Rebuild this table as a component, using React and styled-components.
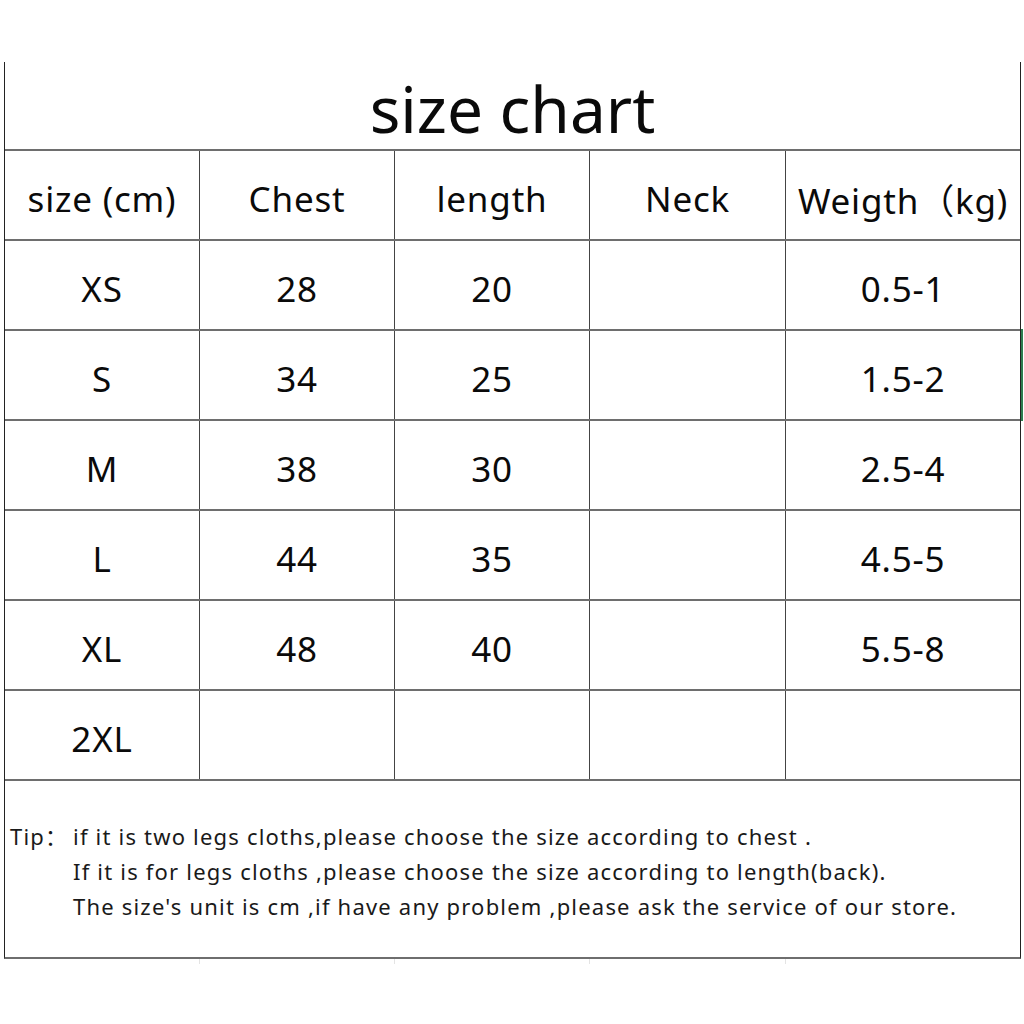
import React from "react";
import styled, { createGlobalStyle } from "styled-components";

const Global = createGlobalStyle`
  html, body { margin: 0; padding: 0; background: #fff; }
  body { font-family: "Noto Sans", "Noto Sans CJK SC", sans-serif; color: #111; }
`;

const Page = styled.div`
  width: 1024px;
  height: 1024px;
  padding: 62px 0 0 4px;
  box-sizing: border-box;
`;

const Sheet = styled.div`
  width: 1017px;
  border-left: 1px solid #222;
  border-right: 1px solid #222;
  border-bottom: 2px solid #6e6e6e;
  box-sizing: border-box;
`;

const Title = styled.div`
  height: 87px;
  display: flex;
  align-items: center;
  justify-content: center;
  font-size: 64px;
  line-height: 1;
  padding-top: 6px;
  box-sizing: border-box;
  color: #0a0a0a;
`;

const Row = styled.div`
  position: relative;
  display: grid;
  grid-template-columns: 195px 195px 195px 196px 1fr;
  height: 90px;
  border-top: 2px solid #6e6e6e;
  box-sizing: border-box;
  ${(p) =>
    p.$selected &&
    `&::after {
      content: "";
      position: absolute;
      right: -3px;
      top: -2px;
      bottom: -2px;
      width: 2px;
      background: #2e7d4f;
    }`}
`;

const Cell = styled.div`
  display: flex;
  align-items: center;
  justify-content: center;
  font-size: 35px;
  letter-spacing: 0.8px;
  padding-top: 6px;
  box-sizing: border-box;
  white-space: nowrap;
  border-right: ${(p) => (p.$last ? "none" : "1px solid #444")};
  color: #0a0a0a;
`;

const TipBox = styled.div`
  height: 178px;
  border-top: 2px solid #6e6e6e;
  box-sizing: border-box;
  display: flex;
  align-items: center;
  padding: 4px 0 0 5px;
  font-size: 22px;
  letter-spacing: 1.2px;
  color: #1a1a1a;
`;

const TipGrid = styled.div`
  display: grid;
  grid-template-columns: 63px 1fr;
  line-height: 35px;
  white-space: nowrap;
`;

const TipLabel = styled.span``;
const TipLine = styled.span`
  grid-column: 2;
`;

const Gridlines = styled.div`
  display: grid;
  grid-template-columns: 196px 195px 195px 196px 1fr;
  width: 1017px;
  height: 5px;
`;

const Tick = styled.div`
  border-right: 1px solid #e4e4e4;
`;

const header = ["size (cm)", "Chest", "length", "Neck", "Weigth（kg)"];
const rows = [
  ["XS", "28", "20", "", "0.5-1"],
  ["S", "34", "25", "", "1.5-2"],
  ["M", "38", "30", "", "2.5-4"],
  ["L", "44", "35", "", "4.5-5"],
  ["XL", "48", "40", "", "5.5-8"],
  ["2XL", "", "", "", ""],
];

export default function App() {
  return (
    <Page>
      <Global />
      <Sheet>
        <Title>size chart</Title>
        <Row>
          {header.map((h, i) => (
            <Cell key={i} $last={i === 4}>{h}</Cell>
          ))}
        </Row>
        {rows.map((r, ri) => (
          <Row key={ri} $selected={ri === 1}>
            {r.map((c, i) => (
              <Cell key={i} $last={i === 4}>{c}</Cell>
            ))}
          </Row>
        ))}
        <TipBox>
          <TipGrid>
            <TipLabel>Tip：</TipLabel>
            <TipLine>if it is two legs cloths,please choose the size according to chest .</TipLine>
            <TipLine>If it is for legs cloths ,please choose the size according to length(back).</TipLine>
            <TipLine>The size's unit is cm ,if have any problem ,please ask the service of our store.</TipLine>
          </TipGrid>
        </TipBox>
      </Sheet>
      <Gridlines>
        <Tick /><Tick /><Tick /><Tick /><div />
      </Gridlines>
    </Page>
  );
}
